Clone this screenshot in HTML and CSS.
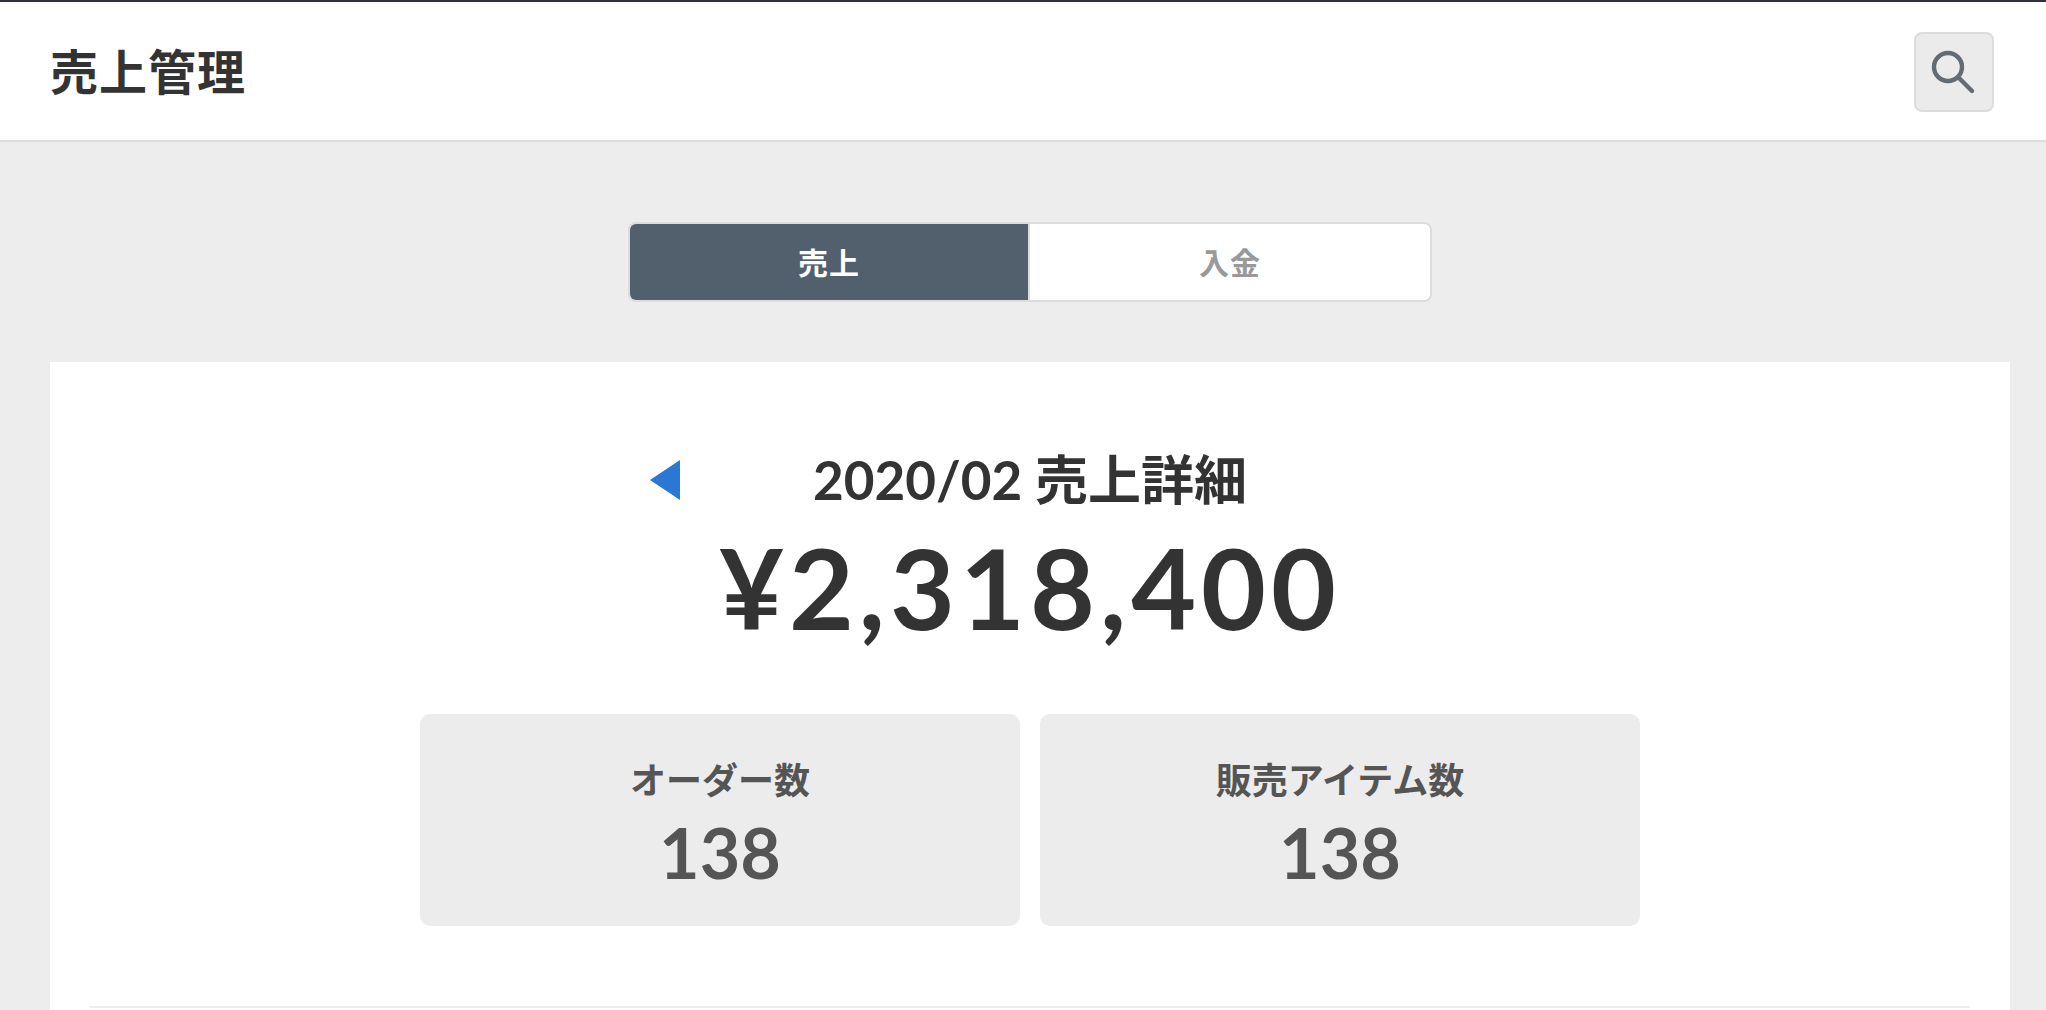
FILE: index.html
```html
<!DOCTYPE html>
<html lang="ja">
<head>
<meta charset="utf-8">
<meta name="viewport" content="width=device-width, initial-scale=1">
<title>売上管理</title>
<link rel="stylesheet" href="styles.css">
</head>
<body>
<header class="header">
  <h1 class="header-title">売上管理</h1>
  <button class="search" type="button" aria-label="検索">
    <svg class="search-icon" viewBox="0 0 48 48" aria-hidden="true"><circle cx="18" cy="19" r="14"/><path d="M28.5 29.5 42 43"/></svg>
  </button>
</header>
<main class="main">
  <div class="tabs">
    <button class="tab tab-active" type="button">売上</button>
    <button class="tab" type="button">入金</button>
  </div>
  <section class="card">
    <div class="period">
      <button class="prev" type="button" aria-label="前の月"><svg class="prev-icon" viewBox="0 0 30 40" aria-hidden="true"><path d="M30 0v40L0 20z"/></svg></button>
      <h2 class="period-title">2020/02 売上詳細</h2>
    </div>
    <p class="total">¥2,318,400</p>
    <dl class="stats">
      <div class="stat"><dt class="stat-label">オーダー数</dt><dd class="stat-value">138</dd></div>
      <div class="stat"><dt class="stat-label">販売アイテム数</dt><dd class="stat-value">138</dd></div>
    </dl>
    <hr class="divider">
  </section>
</main>
</body>
</html>
```
FILE: styles.css
```css
* { box-sizing: border-box; }

body {
  display: flex;
  flex-direction: column;
  min-height: 100vh;
  margin: 0;
  background: #ededed;
  color: #333;
  font-family: Lato, "Noto Sans CJK JP", sans-serif;
  font-weight: 700;
}

h1, h2, p, dl, dd { margin: 0; }

button {
  padding: 0;
  font: inherit;
  cursor: pointer;
}

.header {
  display: flex;
  align-items: center;
  justify-content: space-between;
  height: 142px;
  padding: 2px 52px 0 50px;
  border-top: 2px solid #32323f;
  border-bottom: 2px solid #dcdcdc;
  background: #fff;
}

.header-title {
  font-size: 48px;
  line-height: 72px;
  letter-spacing: 1px;
}

.search {
  display: grid;
  place-items: center;
  width: 80px;
  height: 80px;
  border: 2px solid #dcdcdc;
  border-radius: 8px;
  background: #ebebeb;
}

.search-icon {
  width: 48px;
  height: 48px;
  fill: none;
  stroke: #636c74;
  stroke-width: 4.4;
  stroke-linecap: round;
}

.main {
  display: flex;
  flex: 1;
  flex-direction: column;
  padding: 80px 36px 0 50px;
}

.tabs {
  display: flex;
  width: 100%;
  max-width: 804px;
  height: 80px;
  margin: 0 auto 60px;
  border: 2px solid #dcdcdc;
  border-radius: 8px;
  background: #fff;
  overflow: hidden;
}

.tab {
  width: 50%;
  padding-bottom: 2px;
  border: 0;
  background: #fff;
  color: #999;
  font-size: 30px;
  letter-spacing: 1px;
}

.tab-active {
  border-right: 2px solid #dcdcdc;
  background: #52606e;
  color: #fff;
}

.card {
  flex: 1;
  padding: 80px 40px 0;
  background: #fff;
}

.period {
  display: flex;
  justify-content: center;
  position: relative;
  max-width: 760px;
  margin: 0 auto;
}

.period-title { font-size: 53px; line-height: 76px; }

.prev {
  position: absolute;
  top: 18px;
  left: 0;
  width: 30px;
  height: 40px;
  border: 0;
  background: none;
}

.prev-icon { display: block; width: 30px; height: 40px; fill: #2a77d4; }

.total {
  font-size: 112px;
  line-height: 138px;
  letter-spacing: 5px;
  text-align: center;
}

.stats {
  display: flex;
  justify-content: center;
  gap: 20px;
  margin-top: 58px;
}

.stat {
  width: 600px;
  padding: 39px 0 29px;
  border-radius: 10px;
  background: #ececec;
  color: #555;
  text-align: center;
}

.stat-label { font-size: 36px; line-height: 54px; }
.stat-value { font-size: 70px; line-height: 90px; }

.divider {
  height: 2px;
  margin: 80px 0 0;
  border: 0;
  background: #ededed;
}
```
